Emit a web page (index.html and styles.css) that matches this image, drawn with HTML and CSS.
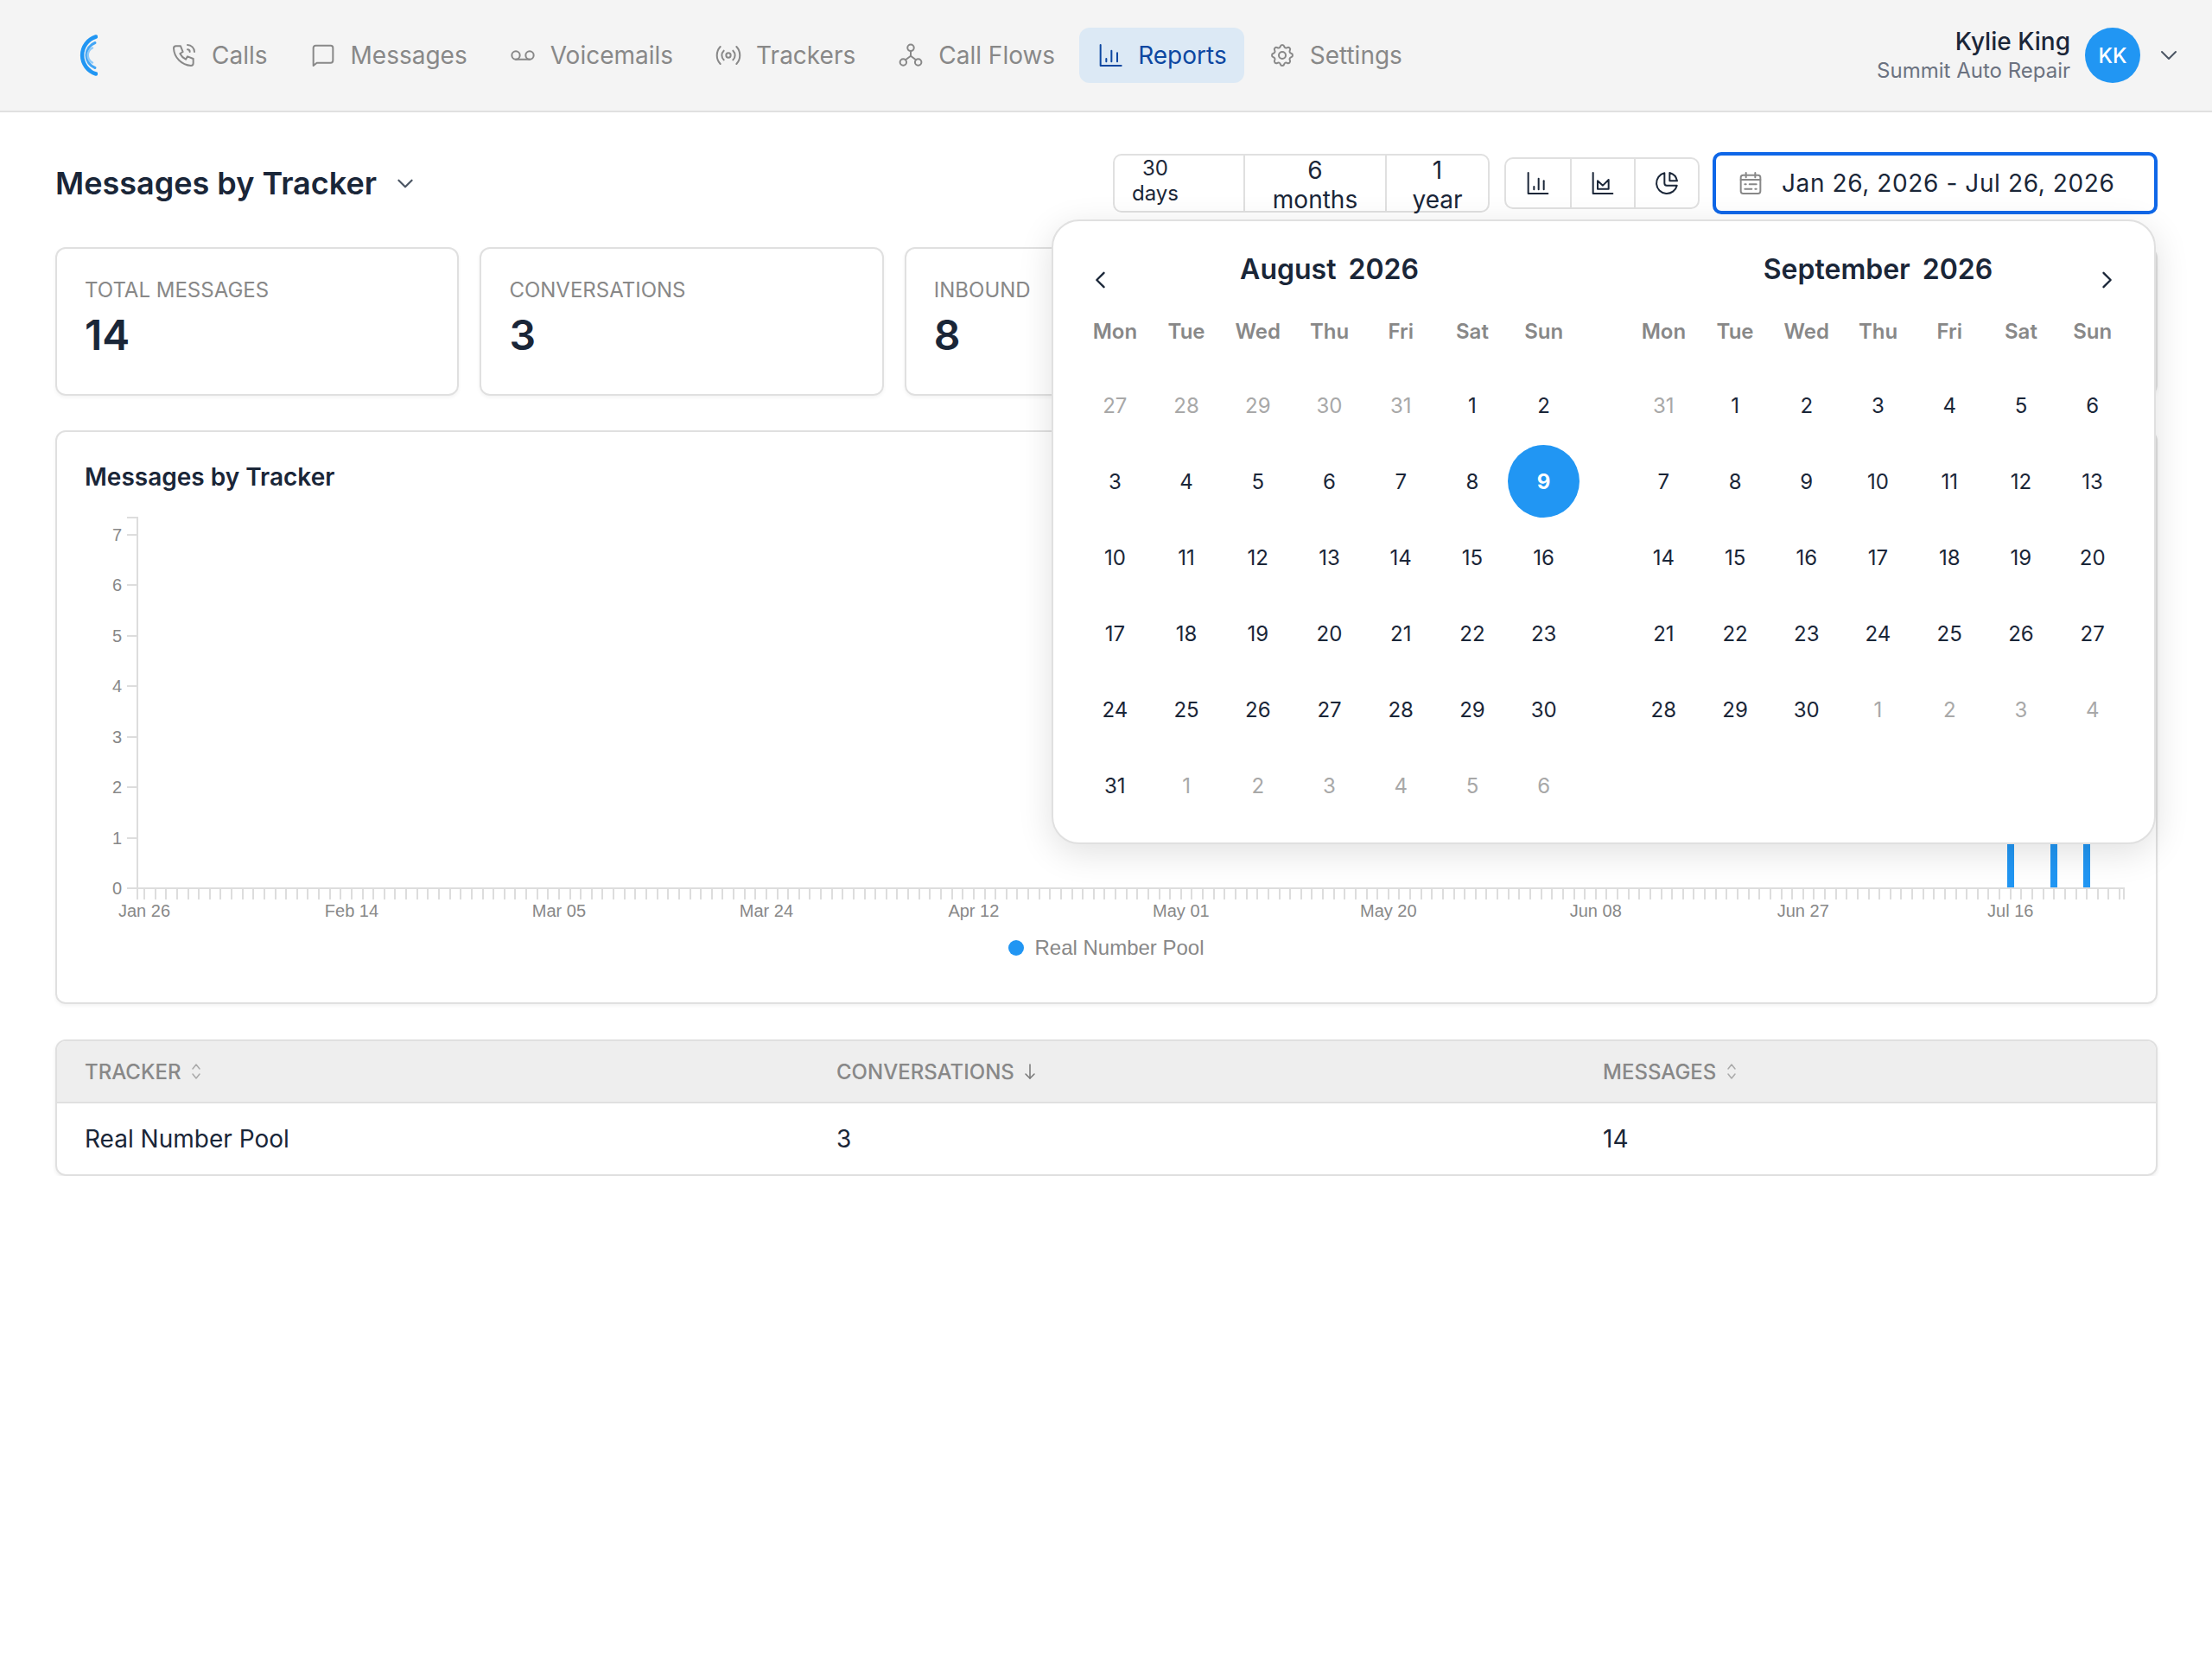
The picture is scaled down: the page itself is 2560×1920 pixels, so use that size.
FILE: index.html
```html
<!DOCTYPE html>
<html lang="en">
<head>
  <meta charset="UTF-8">
  <meta name="viewport" content="width=device-width, initial-scale=1.0">
  <title>Messages by Tracker</title>
  <link rel="stylesheet" href="styles.css">
</head>
<body>
  <header class="topbar">
    <svg class="logo" viewBox="0 0 40 50" fill="none" stroke-linecap="round">
      <path d="M38 3.5A22.5 22.5 0 0 0 38 46.5" stroke="#2196f3" stroke-width="4.5"/>
      <path d="M37 10.5A15.5 15.5 0 0 0 37 39.5" stroke="#42a5f5" stroke-width="3"/>
      <path d="M34 16.5A9.5 9.5 0 0 0 34 33.5" stroke="#90caf9" stroke-width="2.5"/>
    </svg>
    <nav class="nav">
      <a class="nav-item">
        <svg class="icon" viewBox="0 0 24 24"><path d="M5 4h4l2 5l-2.5 1.5a11 11 0 0 0 5 5l1.5 -2.5l5 2v4a2 2 0 0 1 -2 2a16 16 0 0 1 -15 -15a2 2 0 0 1 2 -2"/><path d="M15 7a2 2 0 0 1 2 2"/><path d="M15 3a6 6 0 0 1 6 6"/></svg>
        Calls
      </a>
      <a class="nav-item">
        <svg class="icon" viewBox="0 0 24 24"><path d="M3.5 21V5.5a2 2 0 0 1 2 -2h13a2 2 0 0 1 2 2v11a2 2 0 0 1 -2 2h-12z"/></svg>
        Messages
      </a>
      <a class="nav-item">
        <svg class="icon" viewBox="0 0 24 24"><circle cx="6" cy="12" r="3.5"/><circle cx="18" cy="12" r="3.5"/><path d="M6 15.5h12"/></svg>
        Voicemails
      </a>
      <a class="nav-item">
        <svg class="icon" viewBox="0 0 24 24"><circle cx="12" cy="12" r="2"/><path d="M8 8a5.5 5.5 0 0 0 0 8"/><path d="M16 16a5.5 5.5 0 0 0 0 -8"/><path d="M5 4.5a11 11 0 0 0 0 15"/><path d="M19 19.5a11 11 0 0 0 0 -15"/></svg>
        Trackers
      </a>
      <a class="nav-item">
        <svg class="icon" viewBox="0 0 24 24"><circle cx="12" cy="5.5" r="2.8"/><circle cx="5.5" cy="18" r="2.8"/><circle cx="18.5" cy="18" r="2.8"/><path d="M12 8.3v4.2"/><path d="M7.5 16l4.5 -3.5l4.5 3.5"/></svg>
        Call Flows
      </a>
      <a class="nav-item active">
        <svg class="icon" viewBox="0 0 24 24"><path d="M3.5 3v18h18"/><path d="M8.5 15v2.5"/><path d="M13 8v9.5"/><path d="M18 10v7.5"/></svg>
        Reports
      </a>
      <a class="nav-item">
        <svg class="icon" viewBox="0 0 24 24"><path d="M10.325 4.317c.426 -1.756 2.924 -1.756 3.35 0a1.724 1.724 0 0 0 2.573 1.066c1.543 -.94 3.31 .826 2.37 2.37a1.724 1.724 0 0 0 1.065 2.572c1.756 .426 1.756 2.924 0 3.35a1.724 1.724 0 0 0 -1.066 2.573c.94 1.543 -.826 3.31 -2.37 2.37a1.724 1.724 0 0 0 -2.572 1.065c-.426 1.756 -2.924 1.756 -3.35 0a1.724 1.724 0 0 0 -2.573 -1.066c-1.543 .94 -3.31 -.826 -2.37 -2.37a1.724 1.724 0 0 0 -1.065 -2.572c-1.756 -.426 -1.756 -2.924 0 -3.35a1.724 1.724 0 0 0 1.066 -2.573c-.94 -1.543 .826 -3.31 2.37 -2.37c1 .608 2.296 .07 2.572 -1.065z"/><circle cx="12" cy="12" r="3"/></svg>
        Settings
      </a>
    </nav>
    <div class="user">
      <div class="user-text">
        <div class="user-name">Kylie King</div>
        <div class="user-org">Summit Auto Repair</div>
      </div>
      <div class="avatar">KK</div>
      <svg class="user-chevron" viewBox="0 0 24 24"><path d="M4 8l8 8l8 -8"/></svg>
    </div>
  </header>

  <main class="content">
    <div class="toolbar">
      <h1 class="page-title">Messages by Tracker
        <svg class="title-chevron" viewBox="0 0 24 24"><path d="M5 9l7 7l7 -7"/></svg>
      </h1>
      <div class="btn-group">
        <button class="range-btn days">30 days</button>
        <button class="range-btn months">6 months</button>
        <button class="range-btn year">1 year</button>
      </div>
      <div class="btn-group chart-types">
        <button class="type-btn"><svg class="icon dark" viewBox="0 0 24 24"><path d="M3.5 3v18h17"/><path d="M8.5 15v2.5"/><path d="M12.500 8v9.500"/><path d="M17 10v7.500"/></svg></button>
        <button class="type-btn"><svg class="icon dark" viewBox="0 0 24 24"><path d="M3.500 3v18h17"/><path d="M7.500 17v-7l4.500 4l5 -5v8z"/></svg></button>
        <button class="type-btn"><svg class="icon dark" viewBox="0 0 24 24"><path d="M10 3.200a9 9 0 1 0 10.800 10.800h-8.800a2 2 0 0 1 -2 -2z"/><path d="M14.500 3a9 9 0 0 1 6.500 7h-6.500z"/></svg></button>
      </div>
      <div class="date-wrap">
        <button class="date-btn">
          <svg class="icon" viewBox="0 0 24 24"><rect x="3.500" y="5" width="17" height="16" rx="2"/><path d="M8 3v4"/><path d="M16 3v4"/><path d="M3.500 9h17"/><path d="M7 13h1"/><path d="M11 13h6"/><path d="M7 17h6"/><path d="M16 17h1"/></svg>
          Jan 26, 2026 - Jul 26, 2026
        </button>

        <div class="popup">
          <section class="month">
            <div class="month-head">
              <svg class="month-nav prev" viewBox="0 0 24 24"><path d="M15 5l-7 7l7 7"/></svg>
              <span>August</span><span>2026</span>
            </div>
            <div class="weekdays"><span>Mon</span><span>Tue</span><span>Wed</span><span>Thu</span><span>Fri</span><span>Sat</span><span>Sun</span></div>
            <div class="days">
              <span class="muted">27</span><span class="muted">28</span><span class="muted">29</span><span class="muted">30</span><span class="muted">31</span><span>1</span><span>2</span>
              <span>3</span><span>4</span><span>5</span><span>6</span><span>7</span><span>8</span><span class="selected">9</span>
              <span>10</span><span>11</span><span>12</span><span>13</span><span>14</span><span>15</span><span>16</span>
              <span>17</span><span>18</span><span>19</span><span>20</span><span>21</span><span>22</span><span>23</span>
              <span>24</span><span>25</span><span>26</span><span>27</span><span>28</span><span>29</span><span>30</span>
              <span>31</span><span class="muted">1</span><span class="muted">2</span><span class="muted">3</span><span class="muted">4</span><span class="muted">5</span><span class="muted">6</span>
            </div>
          </section>
          <section class="month">
            <div class="month-head">
              <span>September</span><span>2026</span>
              <svg class="month-nav next" viewBox="0 0 24 24"><path d="M9 5l7 7l-7 7"/></svg>
            </div>
            <div class="weekdays"><span>Mon</span><span>Tue</span><span>Wed</span><span>Thu</span><span>Fri</span><span>Sat</span><span>Sun</span></div>
            <div class="days">
              <span class="muted">31</span><span>1</span><span>2</span><span>3</span><span>4</span><span>5</span><span>6</span>
              <span>7</span><span>8</span><span>9</span><span>10</span><span>11</span><span>12</span><span>13</span>
              <span>14</span><span>15</span><span>16</span><span>17</span><span>18</span><span>19</span><span>20</span>
              <span>21</span><span>22</span><span>23</span><span>24</span><span>25</span><span>26</span><span>27</span>
              <span>28</span><span>29</span><span>30</span><span class="muted">1</span><span class="muted">2</span><span class="muted">3</span><span class="muted">4</span>
            </div>
          </section>
        </div>
      </div>
    </div>

    <div class="stats">
      <div class="stat-card"><div class="stat-label">TOTAL MESSAGES</div><div class="stat-value">14</div></div>
      <div class="stat-card"><div class="stat-label">CONVERSATIONS</div><div class="stat-value">3</div></div>
      <div class="stat-card"><div class="stat-label">INBOUND</div><div class="stat-value">8</div></div>
      <div class="stat-card"><div class="stat-label">OUTBOUND</div><div class="stat-value">6</div></div>
      <div class="stat-card"><div class="stat-label">TRACKERS</div><div class="stat-value">1</div></div>
    </div>

    <section class="chart-card">
      <h2 class="chart-title">Messages by Tracker</h2>
      <!-- viewBox uses page coordinates, chart.js fills it in -->
      <svg id="chart" class="chart" viewBox="66 580 2429 495"></svg>
      <div class="legend"><span class="legend-dot"></span>Real Number Pool</div>
    </section>

    <section class="table-card">
      <div class="table-row table-head">
        <div class="th">TRACKER
          <svg class="sort" viewBox="0 0 16 24"><path d="M4 9l4 -5l4 5"/><path d="M4 15l4 5l4 -5"/></svg>
        </div>
        <div class="th">CONVERSATIONS
          <svg class="sort dark-sort" viewBox="0 0 16 24"><path d="M8 4v16"/><path d="M3 15l5 5l5 -5"/></svg>
        </div>
        <div class="th">MESSAGES
          <svg class="sort" viewBox="0 0 16 24"><path d="M4 9l4 -5l4 5"/><path d="M4 15l4 5l4 -5"/></svg>
        </div>
      </div>
      <div class="table-row table-body">
        <div>Real Number Pool</div>
        <div>3</div>
        <div>14</div>
      </div>
    </section>
  </main>

  <script src="chart.js"></script>
</body>
</html>
```

FILE: styles.css
```css
* {
  box-sizing: border-box;
}
body {
  margin: 0;
  background-color: #ffffff;
  color: #1a2638;
  font-family: Inter, "Noto Sans", sans-serif;
  font-size: 28px;
}
button {
  font: inherit;
  color: inherit;
  background: none;
  border: none;
  padding: 0;
}
svg {
  fill: none;
  stroke: currentColor;
  stroke-linecap: round;
  stroke-linejoin: round;
}

/* Top bar */
.topbar {
  display: flex;
  align-items: center;
  height: 130px;
  padding: 0 38px 0 73px;
  background-color: #f4f4f4;
  border-bottom: 2px solid #e0e0e0;
}
.logo {
  width: 40px;
  height: 50px;
  flex: none;
}
.nav {
  display: flex;
  gap: 8px;
  margin-left: 64px;
}
.nav-item {
  display: flex;
  align-items: center;
  gap: 16px;
  height: 64px;
  padding: 0 20px;
  border-radius: 12px;
  color: #888888;
}
.nav-item.active {
  background-color: #dce9f5;
  color: #0d47a1;
}
.icon {
  width: 32px;
  height: 32px;
  stroke-width: 1.5;
  flex: none;
  color: #888888;
}
.nav-item.active .icon {
  color: #0d47a1;
}
.icon.dark {
  color: #1a2638;
}
.user {
  display: flex;
  align-items: center;
  margin-left: auto;
}
.user-text {
  text-align: right;
  margin-right: 17px;
}
.user-name {
  font-weight: 500;
  line-height: 36px;
}
.user-org {
  font-size: 24px;
  line-height: 32px;
  color: #6b7280;
}
.avatar {
  display: flex;
  align-items: center;
  justify-content: center;
  width: 64px;
  height: 64px;
  border-radius: 50%;
  background-color: #2196f3;
  color: white;
  font-size: 24px;
  font-weight: 500;
}
.user-chevron {
  width: 24px;
  height: 24px;
  margin-left: 21px;
  stroke-width: 2;
  color: #4b5563;
}

/* Page */
.content {
  padding: 46px 63px 0 64px;
}
.toolbar {
  display: flex;
  align-items: center;
  height: 72px;
}
.page-title {
  display: flex;
  align-items: center;
  gap: 20px;
  margin: 0 auto 0 0;
  font-size: 36px;
  font-weight: 600;
}
.title-chevron {
  width: 26px;
  height: 26px;
  stroke-width: 2;
  color: #4b5563;
}
.btn-group {
  display: flex;
  height: 68px;
  border: 2px solid #e0e0e0;
  border-radius: 10px;
  background-color: white;
}
.range-btn {
  padding: 0 20px;
  border-left: 2px solid #e0e0e0;
}
.range-btn.days {
  width: 149px;
  border-left: none;
}
.range-btn.months {
  width: 164px;
}
.range-btn.year {
  width: 119px;
}
.chart-types {
  height: 60px;
  margin-left: 17px;
  margin-right: 15px;
}
.type-btn {
  display: flex;
  align-items: center;
  justify-content: center;
  width: 74px;
  border-left: 2px solid #e0e0e0;
}
.type-btn:first-child {
  border-left: none;
}
.date-wrap {
  position: relative;
}
.date-btn {
  display: flex;
  align-items: center;
  gap: 20px;
  width: 515px;
  height: 72px;
  padding: 0 24px;
  border: 4px solid #0f67e8;
  border-radius: 10px;
  letter-spacing: 0.6px;
  background-color: white;
}

/* Date picker popup */
.popup {
  position: absolute;
  top: 78px;
  right: 2px;
  z-index: 10;
  display: flex;
  gap: 56px;
  width: 1278px;
  height: 723px;
  padding: 34px 30px 0;
  background-color: white;
  border: 2px solid #e0e0e0;
  border-radius: 32px;
  box-shadow: 0 10px 40px rgba(0, 0, 0, 0.12);
}
.month {
  flex: 1;
}
.month-head {
  position: relative;
  display: flex;
  justify-content: center;
  gap: 14px;
  height: 44px;
  margin-bottom: 28px;
  font-size: 32px;
  font-weight: 600;
  line-height: 44px;
}
.month-nav {
  position: absolute;
  top: 20px;
  width: 28px;
  height: 28px;
  stroke-width: 2;
}
.month-nav.prev {
  left: 11px;
}
.month-nav.next {
  right: 11px;
}
.weekdays,
.days {
  display: grid;
  grid-template-columns: repeat(7, 1fr);
  text-align: center;
  font-size: 24px;
}
.weekdays {
  height: 44px;
  margin-bottom: 19px;
  font-weight: 600;
  line-height: 44px;
  color: #888888;
}
.days {
  grid-auto-rows: 88px;
}
.days span {
  display: flex;
  align-items: center;
  justify-content: center;
}
.days .muted {
  color: #a8a8a8;
}
.days .selected {
  height: 84px;
  margin: 2px 0;
  border-radius: 50%;
  background-color: #2196f3;
  color: white;
  font-weight: 700;
}

/* Stat cards */
.stats {
  display: grid;
  grid-template-columns: repeat(5, 1fr);
  gap: 24px;
  margin-top: 38px;
}
.stat-card {
  height: 172px;
  padding: 32px;
  border: 2px solid #e0e0e0;
  border-radius: 12px;
  box-shadow: 0 2px 4px rgba(0, 0, 0, 0.05);
}
.stat-label {
  font-size: 24px;
  line-height: 32px;
  color: #888888;
}
.stat-value {
  margin-top: 6px;
  font-size: 48px;
  font-weight: 600;
  line-height: 60px;
}

/* Chart */
.chart-card {
  height: 664px;
  margin-top: 40px;
  border: 2px solid #e0e0e0;
  border-radius: 12px;
  box-shadow: 0 2px 4px rgba(0, 0, 0, 0.05);
}
.chart-title {
  height: 80px;
  margin: 0;
  padding: 32px 32px 0;
  font-size: 28px;
  font-weight: 600;
  line-height: 40px;
}
.chart {
  display: block;
  width: 2429px;
  height: 495px;
}
.chart text {
  fill: #888888;
  stroke: none;
  font-family: "Liberation Sans", Arial, sans-serif;
  font-size: 20px;
}
.legend {
  display: flex;
  align-items: center;
  justify-content: center;
  gap: 12px;
  height: 44px;
  font-family: "Liberation Sans", Arial, sans-serif;
  font-size: 24px;
  color: #888888;
}
.legend-dot {
  width: 18px;
  height: 18px;
  border-radius: 50%;
  background-color: #2196f3;
}

/* Table */
.table-card {
  margin-top: 41px;
  border: 2px solid #e0e0e0;
  border-radius: 12px;
  overflow: hidden;
  box-shadow: 0 2px 4px rgba(0, 0, 0, 0.08);
}
.table-row {
  display: grid;
  grid-template-columns: 870px 887px 1fr;
  align-items: center;
  padding-left: 0;
}
.table-row > div {
  padding-left: 32px;
}
.table-head {
  height: 72px;
  background-color: #eeeeee;
  border-bottom: 2px solid #e0e0e0;
}
.th {
  display: flex;
  align-items: center;
  gap: 10px;
  font-size: 24px;
  font-weight: 500;
  color: #888888;
}
.sort {
  width: 16px;
  height: 24px;
  stroke-width: 1.5;
  color: #aaaaaa;
}
.dark-sort {
  color: #777777;
}
.table-body {
  height: 82px;
}
```

FILE: chart.js
```js
const svg = document.getElementById('chart');
const NS = 'http://www.w3.org/2000/svg';

const left = 159;
const right = 2459;
const base = 1028;
const top_ = 599;
const step = 12.63;
const unit = 58.5;

const xLabels = ['Jan 26', 'Feb 14', 'Mar 05', 'Mar 24', 'Apr 12', 'May 01', 'May 20', 'Jun 08', 'Jun 27', 'Jul 16'];

// bars are drawn by day index
const bars = [
  { day: 171, value: 5 },
  { day: 175, value: 5 },
  { day: 178, value: 4 }
];

function line(x1, y1, x2, y2) {
  const el = document.createElementNS(NS, 'line');
  el.setAttribute('x1', x1);
  el.setAttribute('y1', y1);
  el.setAttribute('x2', x2);
  el.setAttribute('y2', y2);
  el.setAttribute('stroke', '#dddddd');
  el.setAttribute('stroke-width', 2);
  el.setAttribute('stroke-linecap', 'butt');
  svg.appendChild(el);
}

function label(text, x, y, anchor) {
  const el = document.createElementNS(NS, 'text');
  el.setAttribute('x', x);
  el.setAttribute('y', y);
  el.setAttribute('text-anchor', anchor);
  el.textContent = text;
  svg.appendChild(el);
}

function dayX(day) {
  return 167 + step * day;
}

// y axis
line(left, top_ - 1, left, base);
line(147, top_, left, top_);
for (let i = 0; i <= 7; i++) {
  const y = Math.round(base - unit * i);
  line(147, y, left, y);
  label(String(i), 141, y + 7, 'end');
}

// x axis
line(147, base, right, base);
line(left, base, left, base + 13);
line(right - 1, base, right - 1, base + 13);
for (let day = 0; day < 182; day++) {
  const x = Math.round(dayX(day));
  line(x, base, x, base + 13);
}
xLabels.forEach((text, i) => {
  label(text, dayX(i * 19), base + 26 + 7, 'middle');
});

bars.forEach(bar => {
  const el = document.createElementNS(NS, 'rect');
  const h = bar.value * unit;
  el.setAttribute('x', Math.round(dayX(bar.day)) - 4);
  el.setAttribute('y', base - 1 - h);
  el.setAttribute('width', 8);
  el.setAttribute('height', h);
  el.setAttribute('fill', '#2196f3');
  el.setAttribute('stroke', 'none');
  svg.appendChild(el);
});
```
